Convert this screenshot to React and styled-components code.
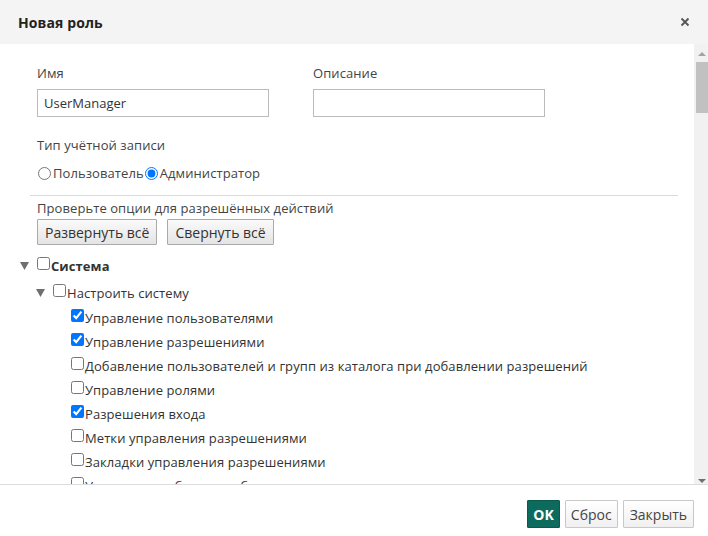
import React from "react";
import styled, { createGlobalStyle } from "styled-components";

const Global = createGlobalStyle`
  html, body { margin: 0; padding: 0; background: #fff; }
  body { font-family: "Open Sans", "Liberation Sans", sans-serif; font-size: 13px; color: #333; }
  * { box-sizing: border-box; }
`;

const Dialog = styled.div`
  width: 708px;
  height: 536px;
  display: flex;
  flex-direction: column;
  background: #fff;
  overflow: hidden;
`;

const Header = styled.div`
  height: 44px;
  flex: none;
  display: flex;
  align-items: center;
  justify-content: space-between;
  padding: 0 17px 0 18px;
  background: #f4f4f4;
`;

const Title = styled.h1`
  margin: 0;
  font-size: 14px;
  font-weight: 700;
  color: #222;
  letter-spacing: 0.1px;
`;

const CloseBtn = styled.button`
  border: 0;
  background: transparent;
  padding: 0;
  width: 12px;
  height: 12px;
  display: flex;
  align-items: center;
  justify-content: center;
  cursor: pointer;
`;

const BodyRow = styled.div`
  flex: 1;
  min-height: 0;
  display: flex;
`;

const Body = styled.div`
  flex: 1;
  min-width: 0;
  overflow: hidden;
  padding: 20px 16px 0 37px;
  letter-spacing: 0.08px;
`;

const ScrollTrack = styled.div`
  width: 14px;
  flex: none;
  display: flex;
  flex-direction: column;
  background: #f1f1f1;
`;

const ScrollArrow = styled.div`
  height: 18px;
  flex: none;
  display: flex;
  justify-content: center;
  align-items: flex-start;
  padding: ${(p) => (p.$down ? "13px 0 0 2px" : "8px 0 0 2px")};
`;

const Thumb = styled.div`
  height: 51px;
  margin-left: 2px;
  background: #c1c1c1;
  flex: none;
`;

const TrackSpace = styled.div`
  flex: 1;
`;

const FieldsRow = styled.div`
  display: flex;
  gap: 44px;
`;

const Field = styled.div`
  display: flex;
  flex-direction: column;
  width: 232px;
`;

const Label = styled.div`
  line-height: 18px;
  color: #444;
  margin: ${(p) => p.$m || "0"};
`;

const TextInput = styled.input`
  margin-top: 7px;
  height: 28px;
  width: 100%;
  border: 1px solid #bbb;
  padding: 0 6px;
  font-family: inherit;
  font-size: 13px;
  color: #333;
  outline: none;
`;

const RadioRow = styled.div`
  margin-top: 10px;
  height: 18px;
  display: flex;
  align-items: center;
`;

const RadioLabel = styled.label`
  display: inline-flex;
  align-items: center;
  color: #444;
  input { margin: 0 2px 0 1px; width: 13px; height: 13px; }
`;

const Separator = styled.hr`
  border: 0;
  border-top: 1px solid #d5dbe1;
  margin: 13px 0 0 -7px;
`;

const ToolButtons = styled.div`
  display: flex;
  gap: 10px;
  margin-top: 2px;
`;

const GreyButton = styled.button`
  height: 26px;
  padding: 0 7px;
  border: 1px solid #aaa;
  border-radius: 1px;
  background: linear-gradient(#fafafa, #e4e4e4);
  font-family: inherit;
  font-size: 14px;
  color: #333;
`;

const TreeList = styled.ul`
  list-style: none;
  margin: 0 0 0 ${(p) => p.$ml || 0}px;
  padding: 0;
`;

const Row = styled.div`
  display: flex;
  align-items: center;
  height: ${(p) => p.$h}px;
  margin-top: ${(p) => p.$mt || 0}px;
  padding-left: ${(p) => p.$indent}px;
  white-space: nowrap;
  font-weight: ${(p) => (p.$bold ? 700 : 400)};
  color: #333;
`;

const Toggle = styled.span`
  width: 17px;
  display: inline-flex;
  align-items: center;
`;

const CheckLabel = styled.label`
  display: inline-block;
  line-height: 18px;
  input {
    margin: 0 1px 0 0;
    width: 13px;
    height: 13px;
    vertical-align: 1px;
  }
`;

const Footer = styled.div`
  flex: none;
  height: 52px;
  border-top: 1px solid #ddd;
  display: flex;
  align-items: flex-start;
  justify-content: flex-end;
  gap: 5px;
  padding: 15px 14px 0 0;
`;

const FooterButton = styled.button`
  height: 28px;
  padding: 0 ${(p) => p.$pad}px;
  border: 1px solid ${(p) => (p.$primary ? "#0a5a4f" : "#c8c8c8")};
  background: ${(p) => (p.$primary ? "#0c6b5d" : "linear-gradient(#ffffff, #f0f0f0)")};
  color: ${(p) => (p.$primary ? "#fff" : "#444")};
  font-weight: ${(p) => (p.$primary ? 700 : 400)};
  font-family: inherit;
  font-size: 14px;
  border-radius: 1px;
`;

const Triangle = () => (
  <svg width="9" height="8" viewBox="0 0 9 8">
    <polygon points="0,0 9,0 4.5,8" fill="#6f6f6f" />
  </svg>
);

const ScrollGlyph = ({ down }) => (
  <svg width="8" height="4" viewBox="0 0 8 4">
    <polygon points={down ? "0,0 8,0 4,4" : "0,4 8,4 4,0"} fill={down ? "#707070" : "#a3a3a3"} />
  </svg>
);

const firstItems = [
  { t: "Управление пользователями", c: true },
  { t: "Управление разрешениями", c: true },
  { t: "Добавление пользователей и групп из каталога при добавлении разрешений", c: false },
  { t: "Управление ролями", c: false },
  { t: "Разрешения входа", c: true },
  { t: "Метки управления разрешениями", c: false },
  { t: "Закладки управления разрешениями", c: false },
  { t: "Управление объектами безопасности", c: false },
  { t: "Управление журналом аудита", c: false },
  { t: "Управление лицензиями", c: false },
];

const actions = ["Просмотр", "Создание", "Изменение", "Удаление"];

const mk = (t, obj) => ({ t, items: actions.map((a) => ({ t: `${a}: ${obj}`, c: false })) });

const tree = [
  {
    t: "Система",
    groups: [
      { t: "Настроить систему", items: firstItems },
      mk("Мониторинг", "мониторинг"),
      mk("Журналы", "журналы"),
    ],
  },
  {
    t: "Данные",
    groups: [mk("Источники данных", "источники"), mk("Модели", "модели")],
  },
];

export default function App() {
  return (
    <>
      <Global />
      <Dialog>
        <Header>
          <Title>Новая роль</Title>
          <CloseBtn aria-label="Закрыть">
            <svg width="10" height="10" viewBox="0 0 10 10">
              <path d="M1.5 1.5 L8.5 8.5 M8.5 1.5 L1.5 8.5" stroke="#555" strokeWidth="1.8" />
            </svg>
          </CloseBtn>
        </Header>
        <BodyRow>
          <Body>
            <FieldsRow>
              <Field>
                <Label>Имя</Label>
                <TextInput defaultValue="UserManager" />
              </Field>
              <Field>
                <Label>Описание</Label>
                <TextInput defaultValue="" />
              </Field>
            </FieldsRow>
            <Label $m="19px 0 0 0">Тип учётной записи</Label>
            <RadioRow>
              <RadioLabel>
                <input type="radio" name="acct" />
                Пользователь
              </RadioLabel>
              <RadioLabel>
                <input type="radio" name="acct" defaultChecked />
                Администратор
              </RadioLabel>
            </RadioRow>
            <Separator />
            <Label $m="3px 0 0 0">Проверьте опции для разрешённых действий</Label>
            <ToolButtons>
              <GreyButton>Развернуть всё</GreyButton>
              <GreyButton>Свернуть всё</GreyButton>
            </ToolButtons>
            <TreeList $ml={-17}>
              {tree.map((top, ti) => (
                <li key={top.t}>
                  <Row $h={28} $mt={ti === 0 ? 7 : 0} $indent={0} $bold>
                    <Toggle><Triangle /></Toggle>
                    <CheckLabel>
                      <input type="checkbox" />
                      {top.t}
                    </CheckLabel>
                  </Row>
                  <TreeList>
                    {top.groups.map((g) => (
                      <li key={g.t}>
                        <Row $h={26} $indent={16}>
                          <Toggle><Triangle /></Toggle>
                          <CheckLabel>
                            <input type="checkbox" />
                            {g.t}
                          </CheckLabel>
                        </Row>
                        <TreeList>
                          {g.items.map((it) => (
                            <li key={it.t}>
                              <Row $h={24} $indent={51}>
                                <CheckLabel>
                                  <input type="checkbox" defaultChecked={it.c} />
                                  {it.t}
                                </CheckLabel>
                              </Row>
                            </li>
                          ))}
                        </TreeList>
                      </li>
                    ))}
                  </TreeList>
                </li>
              ))}
            </TreeList>
          </Body>
          <ScrollTrack aria-hidden="true">
            <ScrollArrow><ScrollGlyph /></ScrollArrow>
            <Thumb />
            <TrackSpace />
            <ScrollArrow $down><ScrollGlyph down /></ScrollArrow>
          </ScrollTrack>
        </BodyRow>
        <Footer>
          <FooterButton $primary $pad={5}>OK</FooterButton>
          <FooterButton $pad={5}>Сброс</FooterButton>
          <FooterButton $pad={6}>Закрыть</FooterButton>
        </Footer>
      </Dialog>
    </>
  );
}
